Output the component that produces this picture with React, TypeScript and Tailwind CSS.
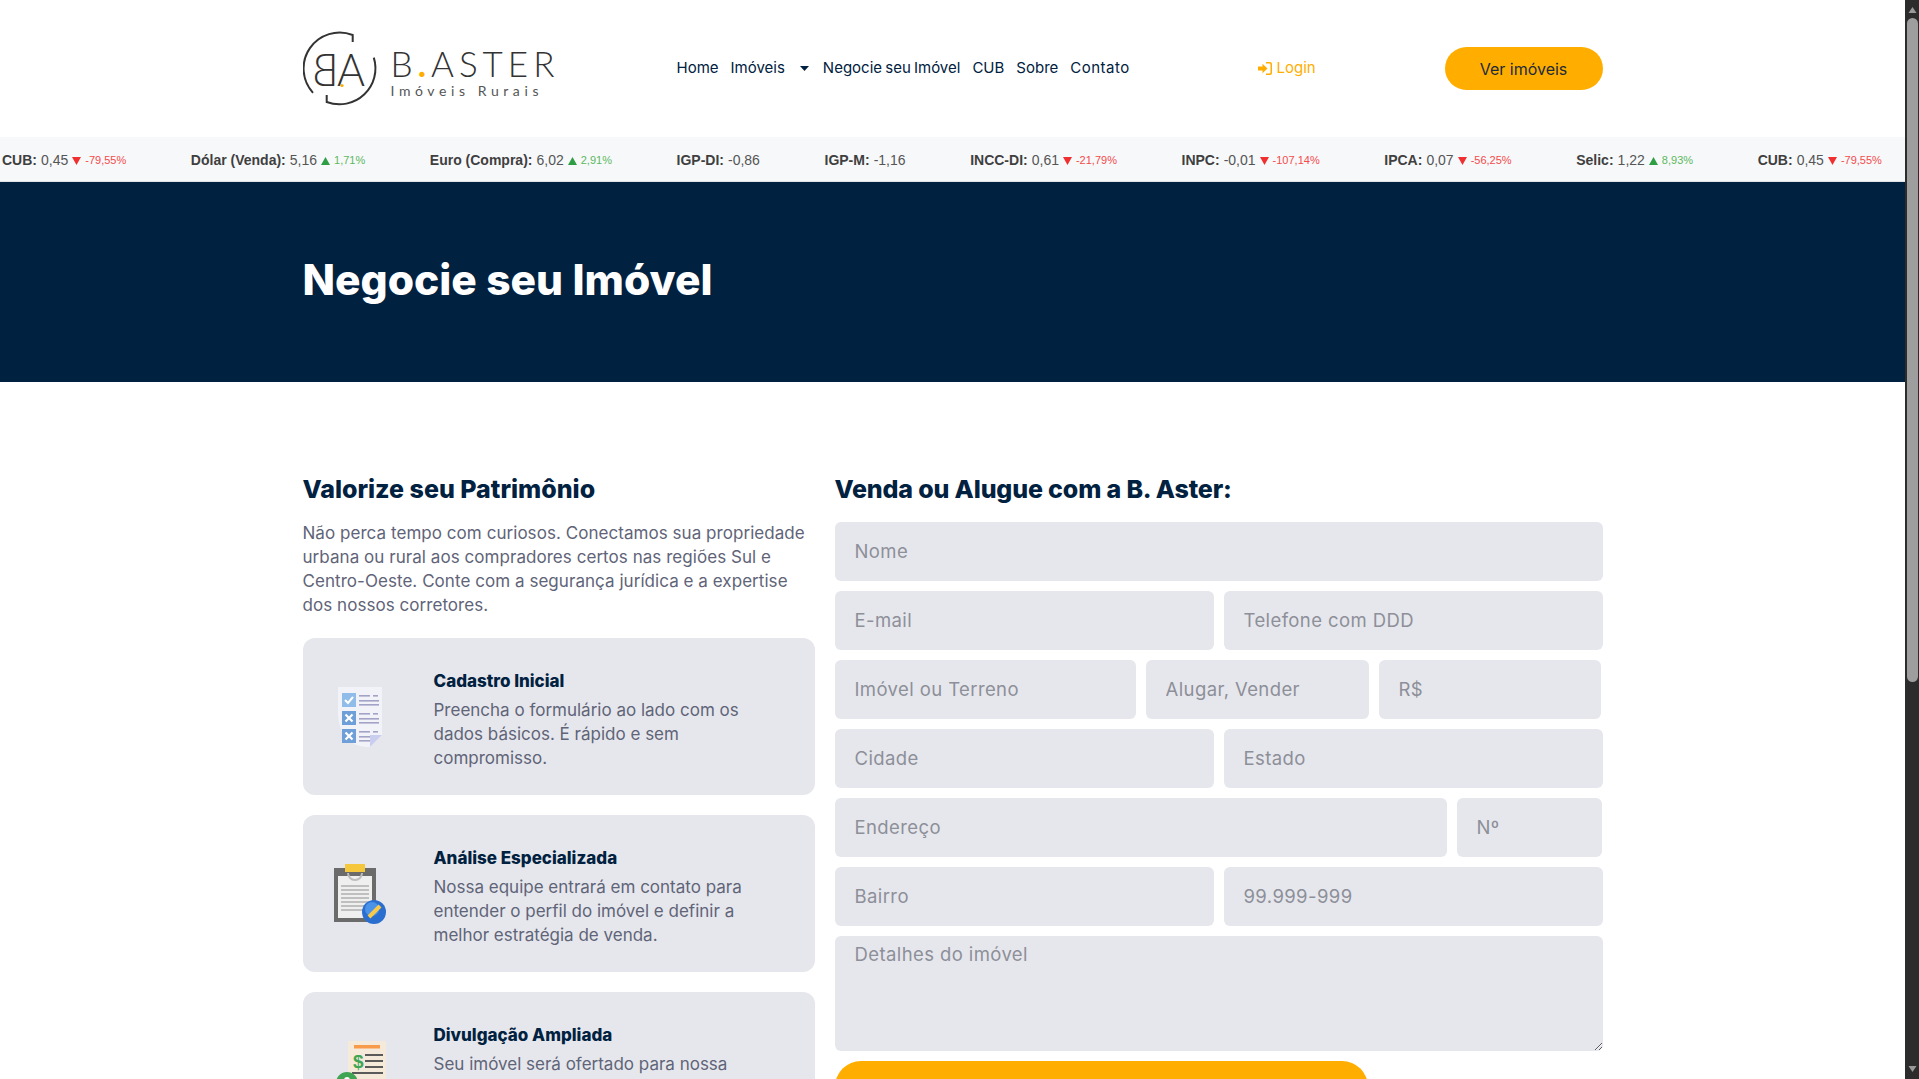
import React from "react";

const ticker = [
  { l: "CUB", v: "0,45", c: "-79,55%", d: "down" },
  { l: "Dólar (Venda)", v: "5,16", c: "1,71%", d: "up" },
  { l: "Euro (Compra)", v: "6,02", c: "2,91%", d: "up" },
  { l: "IGP-DI", v: "-0,86" },
  { l: "IGP-M", v: "-1,16" },
  { l: "INCC-DI", v: "0,61", c: "-21,79%", d: "down" },
  { l: "INPC", v: "-0,01", c: "-107,14%", d: "down" },
  { l: "IPCA", v: "0,07", c: "-56,25%", d: "down" },
  { l: "Selic", v: "1,22", c: "8,93%", d: "up" },
  { l: "CUB", v: "0,45", c: "-79,55%", d: "down" },
];

function Logo() {
  return (
    <div className="flex items-center w-[252px] h-[80px] shrink-0">
      <svg width="80" height="80" viewBox="0 0 80 80" className="shrink-0 mt-[5px]" fill="none">
        <path d="M49.7 11V4A36 36 0 0 0 10 61.800" stroke="#333" strokeWidth="2" />
        <path d="M23.700 64V71A36 36 0 0 0 70.800 26.600" stroke="#333" strokeWidth="2" />
        <text transform="translate(35.5 55) scale(-1 1)" fontFamily="Lato" fontWeight="300" fontSize="46" fill="#333" textLength="26" lengthAdjust="spacingAndGlyphs">B</text>
        <text x="34" y="55" fontFamily="Lato" fontWeight="300" fontSize="46" fill="#333" textLength="28" lengthAdjust="spacingAndGlyphs">A</text>
        <circle cx="39" cy="54.5" r="1.6" fill="#ffae00" />
      </svg>
      <div className="ml-[8px] mt-[6px] flex flex-col font-['Lato'] text-[#333]">
        <div className="text-[35px] leading-[36px] font-light tracking-[5px] whitespace-nowrap">
          B<span className="text-[#ffae00] font-bold">.</span>ASTER
        </div>
        <div className="mt-[2px] text-[14px] leading-[16px] tracking-[4.6px] font-normal whitespace-nowrap text-[#555]">Imóveis Rurais</div>
      </div>
    </div>
  );
}

function Header() {
  return (
    <header className="h-[137px] flex items-center justify-center bg-white">
      <div className="w-[1300px] flex items-center font-['Inter'] text-[#002140]">
        <Logo />
        <nav className="ml-[122px] flex items-center gap-[12px] text-[15px] whitespace-nowrap w-[500px]">
          <span>Home</span>
          <span className="flex items-center">
            Imóveis
            <svg width="9" height="5" viewBox="0 0 9 5" className="ml-[15px] mr-[2px]"><path d="M0 0h9L4.5 5z" fill="#002140" /></svg>
          </span>
          <span className="[word-spacing:-1px]">Negocie seu Imóvel</span>
          <span>CUB</span>
          <span>Sobre</span>
          <span className="tracking-[0.5px]">Contato</span>
        </nav>
        <div className="ml-[81px] flex items-center gap-[5px] text-[15px] text-[#ffae00]">
          <svg width="14" height="13" viewBox="0 0 14 13" fill="#ffae00">
            <path d="M0 4.500h4.500V1.800L9.500 6.500l-5 4.700V8.500H0z" />
            <path d="M8 0h4a2 2 0 0 1 2 2v9a2 2 0 0 1-2 2H8v-1.500h3.500a1 1 0 0 0 1-1v-8a1 1 0 0 0-1-1H8z" />
          </svg>
          Login
        </div>
        <button className="ml-auto w-[158px] h-[43px] rounded-full bg-[#ffae00] text-[16px] text-[#1b2a3a]">Ver imóveis</button>
      </div>
    </header>
  );
}

function Ticker() {
  return (
    <div className="h-[45px] flex items-center pl-[2px] pt-[3px] bg-[#f7f8fa] border-b border-[#dfe3e8] font-['Liberation_Sans'] text-[14px] text-[#555] whitespace-nowrap overflow-hidden gap-[64.600px]">
      {ticker.map((t, i) => (
        <span key={i} className="flex items-center shrink-0">
          <b className="text-[#3f3f3f]">{t.l}:</b>
          <span className="ml-[4px]">{t.v}</span>
          {t.c && (
            <span className={`ml-[4px] flex items-center text-[11px] ${t.d === "up" ? "text-[#5cb860]" : "text-[#f44b4b]"}`}>
              {t.d === "up" ? (
                <svg width="9" height="8" viewBox="0 0 9 8" className="mr-[4px]"><path d="M4.500 0L9 8H0z" fill="#2e9e44" /></svg>
              ) : (
                <svg width="9" height="8" viewBox="0 0 9 8" className="mr-[4px]"><path d="M0 0h9L4.500 8z" fill="#f03030" /></svg>
              )}
              {t.c}
            </span>
          )}
        </span>
      ))}
    </div>
  );
}

function IconChecklist() {
  return (
    <svg width="44" height="60" viewBox="0 0 44 60">
      <path d="M0 0h44v48L32 60C12 60 2 50 0 28z" fill="#f1f3f8" />
      <path d="M32 60V48h12z" fill="#c9cdee" />
      <rect x="4" y="6" width="14" height="14" fill="#8fbce8" />
      <path d="M7 13l3 3 5-6" stroke="#fff" strokeWidth="2" fill="none" />
      <rect x="4" y="24" width="14" height="14" fill="#6f9fd8" />
      <path d="M7.500 27.500l7 7m0-7l-7 7" stroke="#fff" strokeWidth="2.200" />
      <rect x="4" y="42" width="14" height="14" fill="#6f9fd8" />
      <path d="M7.500 45.500l7 7m0-7l-7 7" stroke="#fff" strokeWidth="2.200" />
      <g fill="#a3a3c8">
        <rect x="21" y="8" width="11" height="1.600" /><rect x="35" y="8" width="5" height="1.600" />
        <rect x="21" y="13" width="20" height="1.600" /><rect x="21" y="17" width="20" height="1.600" />
        <rect x="21" y="26" width="11" height="1.600" /><rect x="35" y="26" width="5" height="1.600" />
        <rect x="21" y="31" width="20" height="1.600" /><rect x="21" y="35" width="20" height="1.600" />
        <rect x="21" y="44" width="11" height="1.600" /><rect x="35" y="44" width="5" height="1.600" />
        <rect x="21" y="49" width="11" height="1.600" /><rect x="21" y="53" width="11" height="1.600" />
      </g>
    </svg>
  );
}

function IconClipboard() {
  return (
    <svg width="52" height="60" viewBox="0 0 52 60">
      <rect x="0" y="4" width="42" height="54" fill="#6b6b6b" />
      <rect x="4" y="12" width="34" height="42" fill="#efefef" />
      <path d="M14 9a7 7 0 0 0 14 0" stroke="#bdbdbd" strokeWidth="2" fill="none" />
      <rect x="11" y="0" width="20" height="8" fill="#f5c73d" />
      <g fill="#bfbfbf">
        <rect x="7" y="21" width="28" height="2" /><rect x="7" y="25" width="28" height="2" />
        <rect x="7" y="29" width="28" height="2" /><rect x="7" y="33" width="28" height="2" />
        <rect x="7" y="37" width="28" height="2" /><rect x="7" y="41" width="28" height="2" />
        <rect x="7" y="45" width="28" height="2" />
      </g>
      <circle cx="40" cy="48" r="12" fill="#2a6fd0" />
      <circle cx="38" cy="45" r="7" fill="#4a93e8" />
      <path d="M35 53l11-11" stroke="#f8c94a" strokeWidth="4" />
    </svg>
  );
}

function IconMoney() {
  return (
    <svg width="54" height="60" viewBox="0 0 54 60">
      <rect x="14" y="0" width="38" height="60" fill="#f5ead9" />
      <rect x="20" y="4" width="26" height="3.500" fill="#f79a4a" />
      <text x="19" y="27" fontFamily="Liberation Sans" fontSize="19" fontWeight="700" fill="#3fa553">$</text>
      <g fill="#5a5a5a">
        <rect x="31" y="13" width="18" height="2" /><rect x="31" y="19" width="18" height="2" />
        <rect x="31" y="25" width="18" height="2" /><rect x="18" y="31" width="31" height="2" />
      </g>
      <circle cx="13" cy="42" r="11" fill="#3fa553" />
      <circle cx="13" cy="39" r="3" fill="#fff" />
    </svg>
  );
}

const cards = [
  { t: "Cadastro Inicial", d: ["Preencha o formulário ao lado com os", "dados básicos. É rápido e sem", "compromisso."], i: <IconChecklist />, ml: "ml-[35px]", w: "w-[96px]" },
  { t: "Análise Especializada", d: ["Nossa equipe entrará em contato para", "entender o perfil do imóvel e definir a", "melhor estratégia de venda."], i: <IconClipboard />, ml: "ml-[31px]", w: "w-[100px]" },
  { t: "Divulgação Ampliada", d: ["Seu imóvel será ofertado para nossa", "carteira de investidores e parceiros", "em todo o país."], i: <IconMoney />, ml: "ml-[31px]", w: "w-[100px]" },
];

const inputCls = "h-[59px] min-w-0 rounded-[6px] bg-[#e6e7ec] px-[20px] pb-[2px] text-[18.500px] tracking-[0.4px] text-[#333] placeholder:text-[#8d8f99] outline-none";

function Form() {
  return (
    <form className="flex flex-col gap-[10px]">
      <input className={`${inputCls} w-full`} placeholder="Nome" />
      <div className="flex gap-[10px]">
        <input className={`${inputCls} flex-1`} placeholder="E-mail" />
        <input className={`${inputCls} flex-1`} placeholder="Telefone com DDD" />
      </div>
      <div className="flex gap-[10px]">
        <input className={`${inputCls} w-[301px]`} placeholder="Imóvel ou Terreno" />
        <input className={`${inputCls} w-[223px]`} placeholder="Alugar, Vender" />
        <input className={`${inputCls} w-[222px]`} placeholder="R$" />
      </div>
      <div className="flex gap-[10px]">
        <input className={`${inputCls} flex-1`} placeholder="Cidade" />
        <input className={`${inputCls} flex-1`} placeholder="Estado" />
      </div>
      <div className="flex gap-[10px]">
        <input className={`${inputCls} w-[612px]`} placeholder="Endereço" />
        <input className={`${inputCls} w-[145px]`} placeholder="Nº" />
      </div>
      <div className="flex gap-[10px]">
        <input className={`${inputCls} flex-1`} placeholder="Bairro" />
        <input className={`${inputCls} flex-1`} placeholder="99.999-999" />
      </div>
      <textarea className="h-[115px] rounded-[6px] bg-[#e6e7ec] px-[20px] py-[5px] text-[18.500px] tracking-[0.4px] text-[#333] placeholder:text-[#8d8f99] outline-none" placeholder="Detalhes do imóvel" />
      <button type="button" className="w-[533px] h-[52px] rounded-full bg-[#ffae00] text-[16px] font-semibold text-[#1b2a3a]">Enviar</button>
    </form>
  );
}

function Scrollbar() {
  return (
    <aside className="w-[14px] shrink-0 bg-[#2c2c2c] flex flex-col items-center">
      <svg width="11" height="17" viewBox="0 0 11 17" className="shrink-0"><path d="M1.500 13L5.500 7l4 6z" fill="#9a9a9a" /></svg>
      <div className="w-[11px] h-[664px] rounded-full bg-[#9e9e9e] mt-[1px]" />
      <div className="flex-1" />
      <svg width="11" height="17" viewBox="0 0 11 17" className="shrink-0"><path d="M1.500 4l4 6 4-6z" fill="#9a9a9a" /></svg>
    </aside>
  );
}

export default function App() {
  return (
    <div className="h-screen flex overflow-hidden bg-white">
      <main className="flex-1 min-w-0 overflow-hidden">
        <Header />
        <Ticker />
        <section className="h-[200px] bg-[#002140] flex items-center justify-center">
          <div className="w-[1300px] mt-[-4px] font-['Inter'] text-[42.500px] font-extrabold text-white">Negocie seu Imóvel</div>
        </section>
        <section className="flex justify-center pt-[91px] font-['Inter']">
          <div className="w-[1300px] flex gap-[20px]">
            <div className="w-[512px] shrink-0">
              <h2 className="text-[25px] leading-[33px] font-extrabold text-[#002140] whitespace-nowrap">Valorize seu Patrimônio</h2>
              <p className="mt-[15px] text-[17px] leading-[24px] tracking-[0.05px] text-[#5f6478] whitespace-nowrap">
                Não perca tempo com curiosos. Conectamos sua propriedade<br />
                urbana ou rural aos compradores certos nas regiões Sul e<br />
                Centro-Oeste. Conte com a segurança jurídica e a expertise<br />
                dos nossos corretores.
              </p>
              <div className="mt-[21px] flex flex-col gap-[20px]">
                {cards.map((c, i) => (
                  <div key={i} className="h-[157px] rounded-[12px] bg-[#e6e7ec] flex items-center">
                    <div className={`${c.ml} ${c.w} shrink-0`}>{c.i}</div>
                    <div className="mt-[5px]">
                      <div className="text-[17px] leading-[24px] font-extrabold text-[#002140]">{c.t}</div>
                      <div className="mt-[5px] text-[17px] leading-[24px] text-[#5f6478] whitespace-nowrap">
                        {c.d.map((l, j) => <div key={j}>{l}</div>)}
                      </div>
                    </div>
                  </div>
                ))}
              </div>
            </div>
            <div className="w-[768px] shrink-0">
              <h2 className="mb-[16px] text-[25px] leading-[33px] font-extrabold tracking-[-0.15px] text-[#002140] whitespace-nowrap">Venda ou Alugue com a B. Aster:</h2>
              <Form />
            </div>
          </div>
        </section>
      </main>
      <Scrollbar />
    </div>
  );
}
